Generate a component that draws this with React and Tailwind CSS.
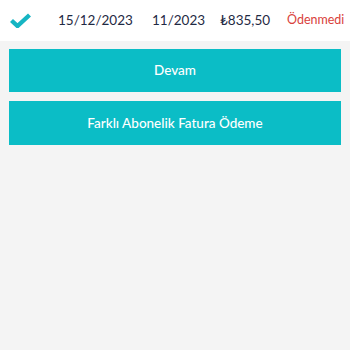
export default function App() {
  return (
    <div className="w-[350px] h-[350px] bg-[#f4f4f4] overflow-hidden" style={{ fontFamily: 'Lato, "Noto Sans", sans-serif' }}>
      <div className="h-[41px] bg-white flex items-center whitespace-nowrap overflow-hidden">
        <div className="w-[58px] shrink-0 pl-[10px] flex items-center">
          <svg width="21" height="15" viewBox="0 0 21 15" className="mt-[-1px]">
            <path d="M1.5 7.5 L7.5 13 L19.5 2" fill="none" stroke="#16b5c3" strokeWidth="4.4" />
          </svg>
        </div>
        <span className="w-[94px] shrink-0 text-[13.5px] text-[#1f2a44]">15/12/2023</span>
        <span className="w-[68px] shrink-0 text-[13.5px] text-[#1f2a44]">11/2023</span>
        <span className="w-[67px] shrink-0 text-[13.5px] text-[#1f2a44]">₺835,50</span>
        <span className="shrink-0 text-[12.5px] text-[#d9423c]">Ödenmedi</span>
      </div>
      <div className="px-[9px] pt-[8px] flex flex-col gap-[9px]">
        <button className="h-[43px] w-full bg-[#0bbdc6] text-white text-[13.5px] font-medium flex items-center justify-center">
          Devam
        </button>
        <button className="h-[44px] w-full bg-[#0bbdc6] text-white text-[13.5px] font-medium flex items-center justify-center">
          Farklı Abonelik Fatura Ödeme
        </button>
      </div>
    </div>
  );
}
